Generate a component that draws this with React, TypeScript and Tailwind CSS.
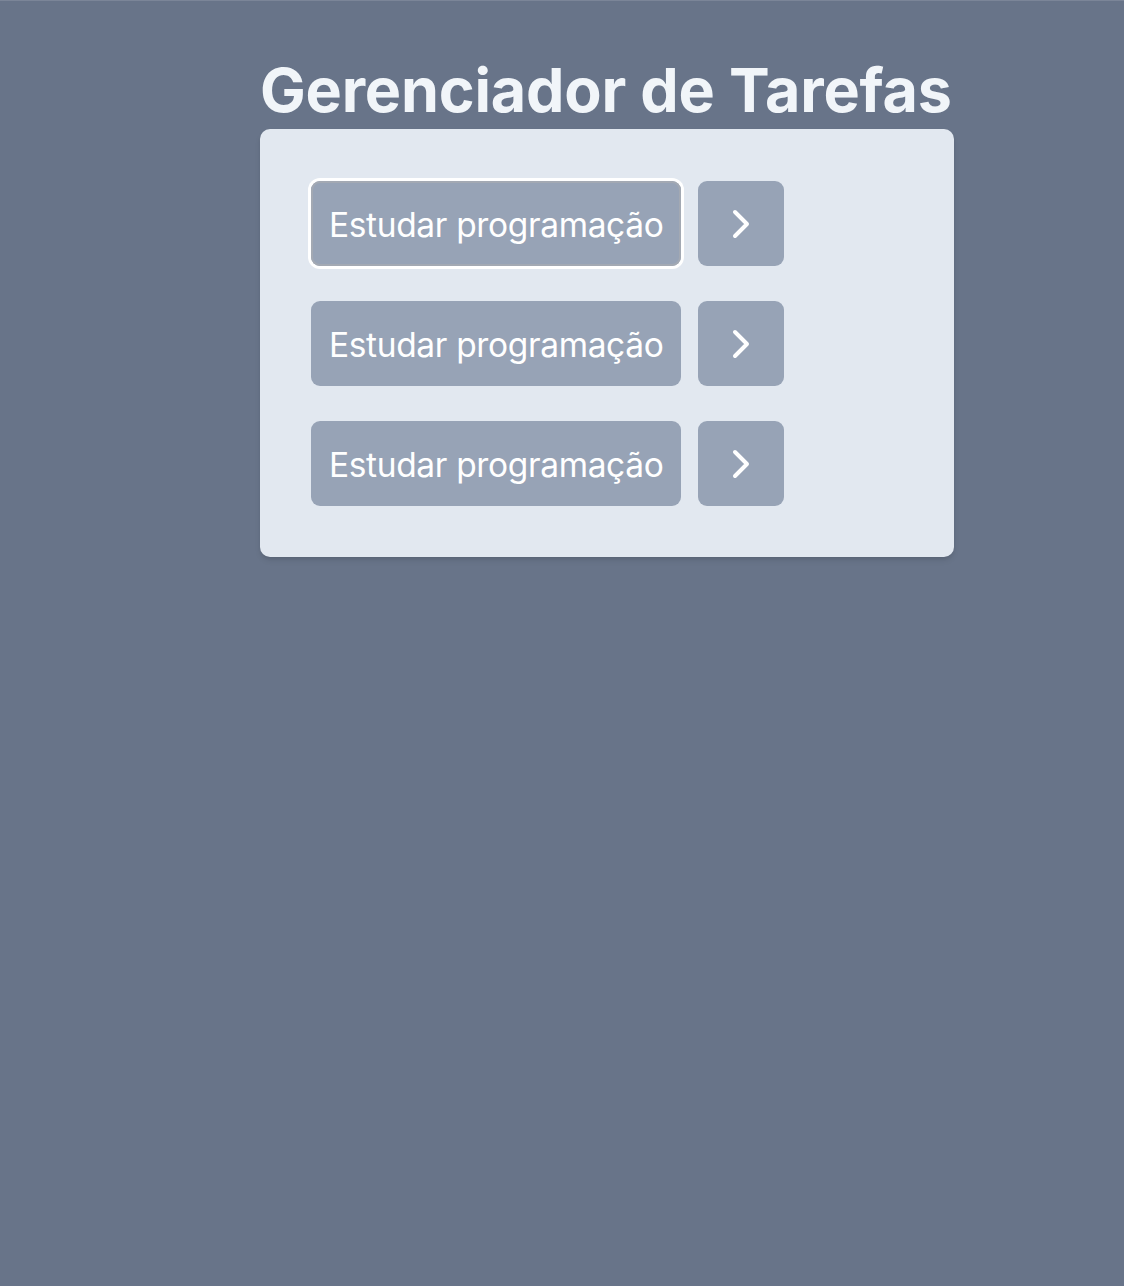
import { ChevronRight } from 'lucide-react'

const tasks = [
  { id: 1, title: 'Estudar programação' },
  { id: 2, title: 'Estudar programação' },
  { id: 3, title: 'Estudar programação' },
]

export default function App() {
  return (
    <div className="min-h-[1286px] w-full bg-[#687489] pl-[260px] pt-[54px] font-['Inter',sans-serif] border-t border-[#7b8598]">
      <div className="w-[694px] space-y-[4px]">
        <h1 className="text-[61px] leading-[70px] font-bold text-[#f1f5f9] tracking-[-0.2px] whitespace-nowrap">
          Gerenciador de Tarefas
        </h1>
        <ul className="bg-[#e2e8f0] rounded-[10px] shadow-md px-[51px] pt-[52px] pb-[51px] space-y-[35px]">
          {tasks.map((task, i) => (
            <li key={task.id} className="flex gap-[17px] items-center">
              <button
                className={
                  i === 0
                    ? 'bg-[#97a3b6] text-white h-[85px] px-[18px] pt-[3px] rounded-[9px] text-[33.5px] text-left tracking-[-0.35px] ring-[3px] ring-white shadow-[inset_0_0_0_2px_#a3a9b3]'
                    : 'bg-[#97a3b6] text-white h-[85px] px-[18px] pt-[3px] rounded-[9px] text-[33.5px] text-left tracking-[-0.35px]'
                }
              >
                {task.title}
              </button>
              <button className="bg-[#97a3b6] text-white w-[86px] h-[85px] rounded-[9px] flex items-center justify-center">
                <ChevronRight size={48} strokeWidth={2} />
              </button>
            </li>
          ))}
        </ul>
      </div>
    </div>
  )
}
